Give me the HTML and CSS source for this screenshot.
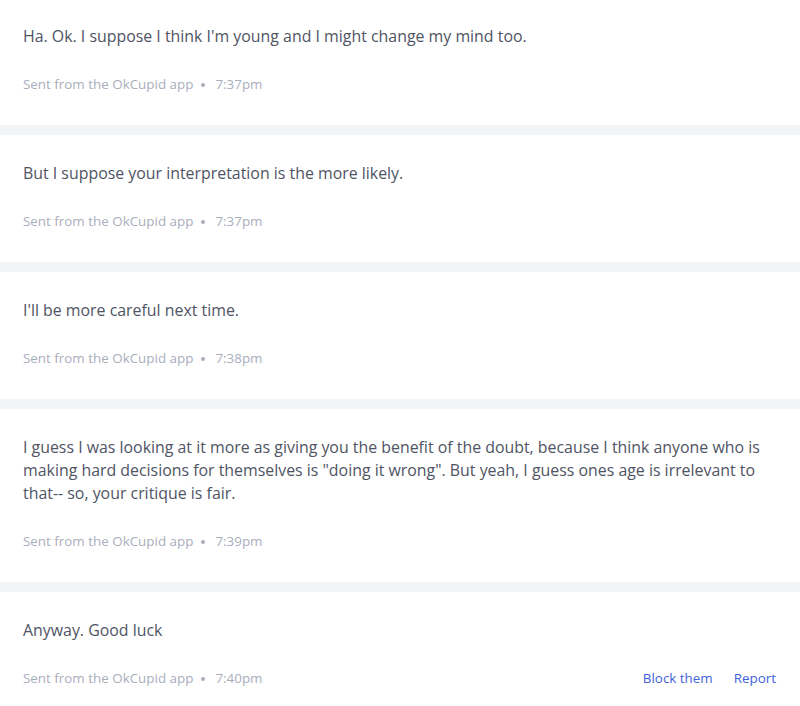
FILE: index.html
```html
<!DOCTYPE html>
<html>
<head>
<meta charset="utf-8">
<link rel="stylesheet" href="styles.css">
</head>
<body>
<div class="thread">
  <div class="msg">
    <p class="text">Ha. Ok. I suppose I think I'm young and I might change my mind too.</p>
    <div class="meta"><span class="info">Sent from the OkCupid app<span class="dot"></span>7:37pm</span></div>
  </div>
  <div class="msg">
    <p class="text">But I suppose your interpretation is the more likely.</p>
    <div class="meta"><span class="info">Sent from the OkCupid app<span class="dot"></span>7:37pm</span></div>
  </div>
  <div class="msg">
    <p class="text">I'll be more careful next time.</p>
    <div class="meta"><span class="info">Sent from the OkCupid app<span class="dot"></span>7:38pm</span></div>
  </div>
  <div class="msg">
    <p class="text">I guess I was looking at it more as giving you the benefit of the doubt, because I think anyone who is making hard decisions for themselves is "doing it wrong". But yeah, I guess ones age is irrelevant to that-- so, your critique is fair.</p>
    <div class="meta"><span class="info">Sent from the OkCupid app<span class="dot"></span>7:39pm</span></div>
  </div>
  <div class="msg">
    <p class="text">Anyway. Good luck</p>
    <div class="meta"><span class="info">Sent from the OkCupid app<span class="dot"></span>7:40pm</span>
      <span class="actions"><a class="link" href="#">Block them</a><a class="link" href="#">Report</a></span>
    </div>
  </div>
</div>
</body>
</html>
```
FILE: styles.css
```css
html, body {
  margin: 0;
  padding: 0;
  background: #f3f4f8;
}
body {
  font-family: "Open Sans", "Noto Sans", sans-serif;
}
.thread {
  display: flex;
  flex-direction: column;
  gap: 10px;
  margin-top: -2px;
}
.msg {
  background: #ffffff;
  padding: 27px 24px 31px 23px;
  display: flex;
  flex-direction: column;
  gap: 26px;
}
.text {
  margin: 0;
  font-size: 15.9px;
  line-height: 23px;
  color: #4f5464;
}
.meta {
  display: flex;
  justify-content: space-between;
  align-items: center;
  font-size: 13.4px;
  line-height: 20px;
  color: #a9aebd;
}
.info {
  display: flex;
  align-items: center;
}
.dot {
  width: 4px;
  height: 4px;
  border-radius: 50%;
  background: #a9aebd;
  margin: 1px 10px 0 8px;
}
.actions {
  display: flex;
  gap: 21px;
}
.link {
  color: #3f63d9;
  text-decoration: none;
}
```
